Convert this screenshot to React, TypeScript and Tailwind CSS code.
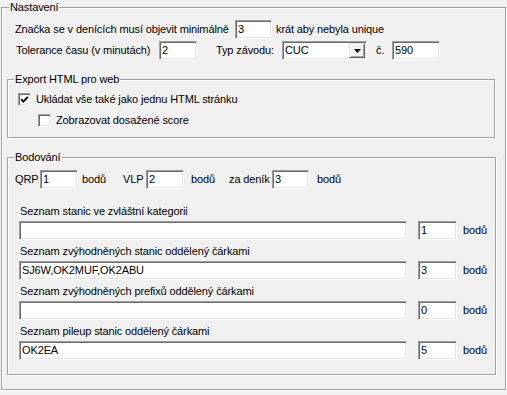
import React from "react";

const sunken =
  "bg-white border border-t-[#a0a0a0] border-l-[#a0a0a0] border-b-white border-r-white shadow-[inset_1px_1px_0_#696969,inset_-1px_-1px_0_#e3e3e3]";

function Field({ className = "", value = "" }: { className?: string; value?: string }) {
  return (
    <div
      className={`${sunken} h-[19px] shrink-0 pl-[2px] text-[11px] leading-[17px] text-black overflow-hidden whitespace-nowrap ${className}`}
    >
      {value}
    </div>
  );
}

function Check({ checked = false }: { checked?: boolean }) {
  return (
    <div className={`${sunken} w-[13px] h-[13px] shrink-0 flex items-center justify-center`}>
      {checked && (
        <svg width="9" height="9" viewBox="0 0 9 9">
          <path d="M1.2 4.2 L3.4 6.6 L7.8 1.8" fill="none" stroke="#000" strokeWidth="1.9" />
        </svg>
      )}
    </div>
  );
}

function Select() {
  return (
    <div className={`${sunken} w-[85px] h-[19px] shrink-0 flex items-center justify-between pl-[2px] pr-[1px] text-[11px] leading-[17px]`}>
      <span>CUC</span>
      <div className="w-[16px] h-[15px] bg-[#f0f0f0] border border-t-[#e3e3e3] border-l-[#e3e3e3] border-r-[#696969] border-b-[#696969] shadow-[inset_1px_1px_0_#fff,inset_-1px_-1px_0_#a0a0a0] flex items-center justify-center">
        <svg width="7" height="4" viewBox="0 0 7 4">
          <path d="M0 0h7L3.5 4z" fill="#000" />
        </svg>
      </div>
    </div>
  );
}

function ListBlock({ label, value, points, first = false }: { label: string; value: string; points: string; first?: boolean }) {
  return (
    <div className={first ? "mt-[16px]" : "mt-[5px]"}>
      <div className="pl-[1px] h-[13px] leading-[13px]">{label}</div>
      <div className="mt-[3px] flex items-center">
        <Field className="w-[388px]" value={value} />
        <Field className="w-[39px] ml-[11px]" value={points} />
        <span className="ml-[6px]">bodů</span>
      </div>
    </div>
  );
}

export default function App() {
  const group =
    "border border-[#a0a0a0] shadow-[inset_1px_1px_0_#fff,1px_1px_0_#fff] p-0 m-0";
  return (
    <div className="w-[507px] h-[395px] bg-[#f0f0f0] pt-[1px] font-['Liberation_Sans',Arial,sans-serif] text-[11px] leading-[13px] tracking-[-0.12px] text-black overflow-hidden">
      <fieldset className={`${group} ml-[1px] w-[505px] h-[389px]`}>
        <legend className="ml-[7px] px-[1px] bg-[#f0f0f0] leading-[13px]">Nastavení</legend>
        <div className="pl-[13px]">
          <div className="mt-[6px] flex items-center h-[19px]">
            <span className="w-[220px] shrink-0 whitespace-nowrap">Značka se v denících musí objevit minimálně</span>
            <Field className="w-[37px]" value="3" />
            <span className="ml-[4px]">krát aby nebyla unique</span>
          </div>
          <div className="mt-[2px] flex items-center h-[19px] pl-[1px]">
            <span className="w-[143px] shrink-0 whitespace-nowrap">Tolerance času (v minutách)</span>
            <Field className="w-[38px]" value="2" />
            <span className="ml-[19px] w-[66px] shrink-0">Typ závodu:</span>
            <Select />
            <span className="ml-[9px] w-[16px] shrink-0">č.</span>
            <Field className="w-[48px]" value="590" />
          </div>
        </div>
        <fieldset className={`${group} ml-[5px] mt-[13px] w-[488px] h-[65px]`}>
          <legend className="ml-[6px] px-[1px] bg-[#f0f0f0] leading-[13px]">Export HTML pro web</legend>
          <div className="pl-[10px]">
            <div className="mt-[7px] flex items-center h-[13px]">
              <Check checked />
              <span className="ml-[5px]">Ukládat vše také jako jednu HTML stránku</span>
            </div>
            <div className="mt-[8px] flex items-center h-[13px] pl-[20px]">
              <Check />
              <span className="ml-[5px]">Zobrazovat dosažené score</span>
            </div>
          </div>
        </fieldset>
        <fieldset className={`${group} ml-[5px] mt-[13px] w-[489px] h-[224px]`}>
          <legend className="ml-[6px] px-[1px] bg-[#f0f0f0] leading-[13px]">Bodování</legend>
          <div className="pl-[11px]">
            <div className="mt-[6px] flex items-center h-[19px] -ml-[4px]">
              <span className="w-[25px] shrink-0">QRP</span>
              <Field className="w-[38px]" value="1" />
              <span className="ml-[4px] w-[41px] shrink-0">bodů</span>
              <span className="w-[23px] shrink-0">VLP</span>
              <Field className="w-[38px]" value="2" />
              <span className="ml-[7px] w-[38px] shrink-0">bodů</span>
              <span className="w-[43px] shrink-0 whitespace-nowrap">za deník</span>
              <Field className="w-[37px]" value="3" />
              <span className="ml-[8px]">bodů</span>
            </div>
            <ListBlock first label="Seznam stanic ve zvláštní kategorii" value="" points="1" />
            <ListBlock label="Seznam zvýhodněných stanic oddělený čárkami" value="SJ6W,OK2MUF,OK2ABU" points="3" />
            <ListBlock label="Seznam zvýhodněných prefixů oddělený čárkami" value="" points="0" />
            <ListBlock label="Seznam pileup stanic oddělený čárkami" value="OK2EA" points="5" />
          </div>
        </fieldset>
      </fieldset>
    </div>
  );
}
